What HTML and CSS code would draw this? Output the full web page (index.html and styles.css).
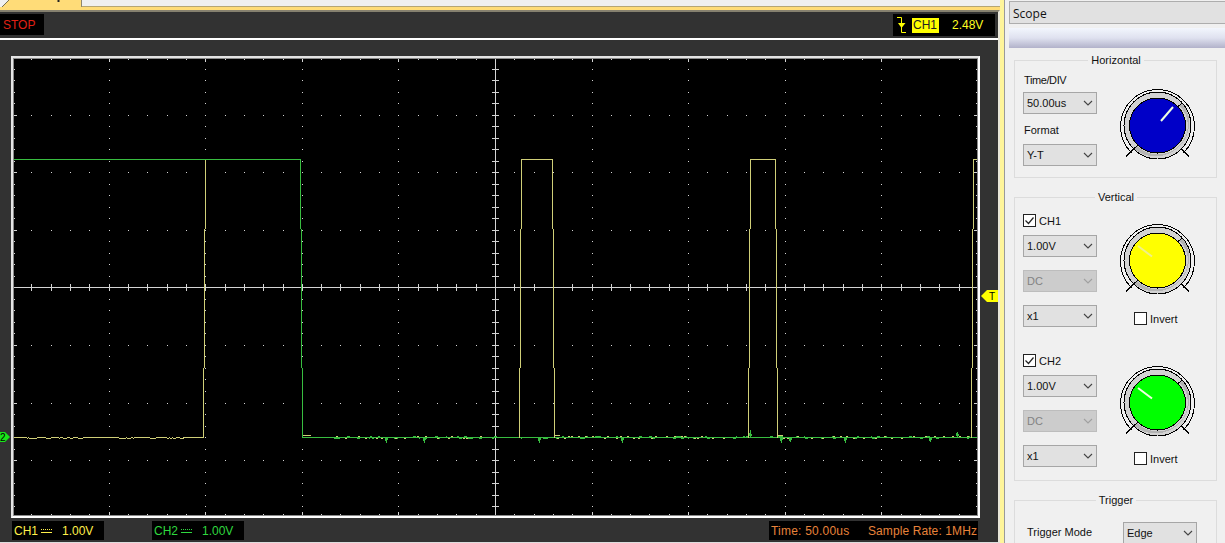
FILE: index.html
```html
<!DOCTYPE html>
<html>
<head>
    <meta charset="utf-8" />
    <title>Scope</title>
    <link rel="stylesheet" href="styles.css">
</head>
<body>
    <svg class="defs" width="0" height="0">
        <symbol id="ring" viewBox="0 0 76 74">
            <g fill="none" stroke="#000" shape-rendering="crispEdges">
                <path d="M14.5 61L7 68.500M62.500 61L70 68.500" stroke-width="1.3" />
                <path d="M12.500 64.800A37 37 0 1 1 64.500 64.800" />
                <circle cx="38.500" cy="37.500" r="33.500" fill="#d2d2d2" />
                <path d="M17.500 57.500A29 28 0 0 0 60.500 17.500L64 15.500A34 33.500 0 0 1 15 61Z" fill="#b4b4b4" stroke="none" />
                <circle cx="38.500" cy="37.500" r="33.500" />
                <path d="M14.500 61L19 57M58 19.500L63 15" />
            </g>
        </symbol>
    </svg>

    <div class="app">
        <div class="scope">
            <div class="tabs">
                <svg width="83" height="7"><path d="M0 0H9L2 7H0Z" fill="#f0f0f0" /><path d="M9 0L2 7" stroke="#77704f" /><path d="M58.500 0V2" stroke="#222" stroke-width="2" /><path d="M81.500 0V7" stroke="#8e876f" /></svg>
                <div class="tabs-rest"></div>
            </div>
            <div class="display">
                <div class="top-bar">
                    <div class="stop">STOP</div>
                    <div class="trig">
                        <svg width="12" height="18"><path d="M1 1.500H5.500V16.500H10" fill="none" stroke="#ff0" /><path d="M2 7H9.500L5.500 12Z" fill="#ff0" /></svg>
                        <span class="trig-ch">CH1</span>
                        <span class="trig-level">2.48V</span>
                    </div>
                </div>
                <div class="screen-row">
                    <svg class="zero-mark" width="11" height="12"><path d="M0 1H5L10 6L5 11H0Z" fill="#19e619" /><text x="0" y="10">2</text></svg>
                    <div class="screen">
                        <svg id="plot" width="963" height="456" viewBox="14 59 963 456" shape-rendering="crispEdges"></svg>
                    </div>
                    <svg class="trig-mark" width="17" height="12"><path d="M0 6L6 0H17V12H6Z" fill="#ff0" /><text x="8" y="10">T</text></svg>
                </div>
                <div class="bottom-bar">
                    <div class="ch ch1"><span>CH1</span><svg width="11" height="6"><path d="M0 1.500H11" stroke-dasharray="1 1" /><path d="M0 4.500H11" /></svg><span>1.00V</span></div>
                    <div class="ch ch2"><span>CH2</span><svg width="11" height="6"><path d="M0 1.500H11" stroke-dasharray="1 1" /><path d="M0 4.500H11" /></svg><span>1.00V</span></div>
                    <div class="rate"><span class="time">Time: 50.00us</span><span class="sample">Sample Rate: 1MHz</span></div>
                </div>
            </div>
        </div>

        <div class="panel">
            <div class="panel-title">Scope</div>
            <div class="panel-strip"></div>

            <div class="group horizontal">
                <div class="legend"><span>Horizontal</span></div>
                <div class="fields">
                    <label class="tight">Time/DIV</label>
                    <div class="select">50.00us<svg class="arrow"><path d="M1 1L5 5L9 1" /></svg></div>
                    <label>Format</label>
                    <div class="select">Y-T<svg class="arrow"><path d="M1 1L5 5L9 1" /></svg></div>
                </div>
                <svg class="knob" width="76" height="74"><use href="#ring" /><ellipse cx="38.500" cy="37.500" rx="28" ry="27.500" class="cap blue" /><path d="M42 33L54 19" class="hand" /></svg>
            </div>

            <div class="group vertical">
                <div class="legend"><span>Vertical</span></div>
                <div class="channel">
                    <div class="fields">
                        <div class="check"><svg width="13" height="13"><path d="M1.500 5.500L4.500 8.500L9.500 2.500" /></svg>CH1</div>
                        <div class="select">1.00V<svg class="arrow"><path d="M1 1L5 5L9 1" /></svg></div>
                        <div class="select off">DC<svg class="arrow"><path d="M1 1L5 5L9 1" /></svg></div>
                        <div class="select">x1<svg class="arrow"><path d="M1 1L5 5L9 1" /></svg></div>
                    </div>
                    <div class="dial">
                        <svg class="knob" width="76" height="74"><use href="#ring" /><ellipse cx="38.500" cy="37.500" rx="28" ry="27.500" class="cap yellow" /><path d="M19 23L33 33.500" class="hand dim" /></svg>
                        <div class="check"><svg width="13" height="13"></svg>Invert</div>
                    </div>
                </div>
                <div class="channel second">
                    <div class="fields">
                        <div class="check"><svg width="13" height="13"><path d="M1.500 5.500L4.500 8.500L9.500 2.500" /></svg>CH2</div>
                        <div class="select">1.00V<svg class="arrow"><path d="M1 1L5 5L9 1" /></svg></div>
                        <div class="select off">DC<svg class="arrow"><path d="M1 1L5 5L9 1" /></svg></div>
                        <div class="select">x1<svg class="arrow"><path d="M1 1L5 5L9 1" /></svg></div>
                    </div>
                    <div class="dial">
                        <svg class="knob" width="76" height="74"><use href="#ring" /><ellipse cx="38.500" cy="37.500" rx="28" ry="27.500" class="cap green" /><path d="M19 23L33 33.500" class="hand" /></svg>
                        <div class="check"><svg width="13" height="13"></svg>Invert</div>
                    </div>
                </div>
            </div>

            <div class="group trigger">
                <div class="legend"><span>Trigger</span></div>
                <label>Trigger Mode</label>
                <div class="select">Edge<svg class="arrow"><path d="M1 1L5 5L9 1" /></svg></div>
            </div>
        </div>
    </div>
    <script src="plot.js"></script>
</body>
</html>
```
FILE: styles.css
```css
body {
    margin: 0;
    width: 1225px;
    height: 543px;
    overflow: hidden;
    background: #f0f0f0;
    font-family: "Liberation Sans", Arial, sans-serif;
    font-size: 11px;
    color: #111;
}

.defs { display: block; }
svg { flex: none; }

.app { display: flex; height: 543px; overflow: hidden; }

/* instrument screen */
.scope {
    width: 1000px;
    height: 543px;
    border-right: 4px solid #fff59a;
    box-shadow: 1px 0 0 #9a9a9a;
    background: #ffdc78;
    flex: none;
}

.tabs { display: flex; height: 7px; }
.tabs svg { display: block; }
.tabs-rest {
    flex: 1;
    height: 6px;
    margin-left: -1px;
    background: #f0f0f0;
    border-bottom: 1px solid #b6a674;
}

.display {
    margin-top: 3px;
    height: 530px;
    background: #323232;
    border-top: 2px solid #86816f;
    border-right: 2px solid #e8e6d8;
    border-bottom: 1px solid #ddd;
    font-size: 12px;
}

.top-bar {
    display: flex;
    justify-content: space-between;
    box-sizing: border-box;
    height: 28px;
    padding: 2px 3px 0 0;
    border-bottom: 2px solid #fff;
}

.stop {
    width: 41px;
    height: 21px;
    padding-left: 3px;
    background: #000;
    color: #e02015;
    line-height: 22px;
}

.trig {
    display: flex;
    align-items: center;
    box-sizing: border-box;
    width: 102px;
    height: 22px;
    padding-left: 3px;
    background: #000;
    color: #ffff20;
}
.trig-ch {
    width: 26px;
    margin-left: 4px;
    padding-left: 1px;
    background: #ff0;
    color: #222;
    line-height: 15px;
}
.trig-level { margin-left: 13px; }

.screen-row { display: flex; height: 462px; padding-top: 16px; }
.zero-mark { margin-top: 375px; font-size: 10px; }
.screen {
    width: 963px;
    height: 456px;
    border: 2px solid #e4e4e4;
    border-right-color: #fff;
    border-bottom-color: #fff;
    outline: 1px solid #8a8a8a;
    outline-offset: -3px;
    padding: 1px;
    background: #000;
}
#plot { display: block; }
.trig-mark { margin: 234px 0 0 1px; font-size: 10px; }

.bottom-bar { display: flex; padding: 3px 0 0 12px; line-height: 20px; }
.ch {
    display: flex;
    align-items: center;
    box-sizing: border-box;
    width: 92px;
    height: 19px;
    margin-right: 48px;
    padding-left: 2px;
    background: #000;
}
.ch svg { margin: 0 10px 0 3px; stroke: currentColor; shape-rendering: crispEdges; }
.ch1 { color: #fff04a; }
.ch2 { color: #2fd83f; }
.rate {
    display: flex;
    justify-content: space-between;
    box-sizing: border-box;
    width: 209px;
    height: 19px;
    margin-left: 477px;
    padding: 0 1px 0 2px;
    background: #000;
    color: #e8833a;
    white-space: nowrap;
}
.time { letter-spacing: 0.22px; }
.sample { letter-spacing: 0.1px; }

/* control panel */
.panel { width: 216px; margin-left: 5px; flex: none; }
.panel-title {
    box-sizing: border-box;
    height: 23px;
    margin-top: 1px;
    padding-left: 3px;
    border: 1px solid #adadad;
    border-right: 0;
    background: #e1e1e1;
    font: 12px/23px "Open Sans", sans-serif;
}
.panel-strip {
    height: 20px;
    margin-top: 4px;
    background: linear-gradient(#f2f6fd, #dfe1ef 50%, #b2b2ca);
}

.group {
    position: relative;
    box-sizing: border-box;
    width: 203px;
    margin-left: 5px;
    border: 1px solid #dcdcdc;
}
.legend {
    position: absolute;
    top: -8px;
    left: 1px;
    right: 0;
    text-align: center;
    line-height: 15px;
}
.legend span { padding: 0 3px; background: #f0f0f0; }

.horizontal { display: flex; height: 118px; margin-top: 12px; }
.vertical { height: 284px; margin-top: 19px; }
.trigger {
    display: flex;
    height: 60px;
    margin-top: 19px;
    padding: 21px 0 0 12px;
}

.fields { width: 74px; margin-left: 8px; }
.horizontal label { display: block; height: 14px; margin: 12px 0 5px 1px; line-height: 14px; }
.horizontal label + .select + label { margin-top: 9px; margin-bottom: 7px; }
.tight { letter-spacing: -0.4px; }
.trigger label { width: 96px; line-height: 21px; }

.select {
    display: flex;
    align-items: center;
    justify-content: space-between;
    box-sizing: border-box;
    width: 74px;
    height: 22px;
    padding: 0 3px;
    border: 1px solid #a6a6a6;
    background: #e1e1e1;
}
.arrow { width: 10px; height: 7px; fill: none; stroke: #444; stroke-width: 1.1; }
.off { background: #ccc; border-color: #bdbdbd; color: #838383; }
.off .arrow { stroke: #a0a0a0; }

.channel { display: flex; padding-top: 16px; height: 124px; }
.channel .select { margin-bottom: 13px; }
.check { display: flex; align-items: center; height: 13px; margin-bottom: 8px; }
.check svg {
    box-sizing: border-box;
    width: 13px;
    height: 13px;
    margin-right: 3px;
    border: 1px solid #222;
    background: #fff;
    fill: none;
    stroke: #222;
    stroke-width: 1.2;
    overflow: visible;
}

.knob { margin-left: 22px; display: block; }
.horizontal .knob { margin-top: 27px; }
.channel .knob { margin-top: 9px; }
.second .knob { margin-top: 11px; }
.dial .check { margin: 15px 0 0 37px; }
.second .dial .check { margin-top: 13px; }
.cap { stroke: #000; shape-rendering: crispEdges; }
.blue { fill: #0000c8; }
.yellow { fill: #ff0; }
.green { fill: #0f0; }
.hand { stroke: #f0ffe0; stroke-width: 2; }
.dim { stroke: #f0f08a; }
```
FILE: plot.js
```js
var plot = document.getElementById("plot");

function path(d, color) {
    var p = document.createElementNS("http://www.w3.org/2000/svg", "path");
    p.setAttribute("d", d);
    p.setAttribute("fill", color);
    plot.appendChild(p);
}

function rect(x, y, w, h) {
    return "M" + x + " " + y + "h" + w + "v" + h + "h" + (-w) + "z";
}

function gridX(k) {
    return Math.floor(12.6 + 19.315 * k);
}

function gridY(k) {
    return Math.floor((k > 28 ? 58.1 : 57.6) + 11.5 * k);
}

function drawGrid() {
    var d = rect(495, 59, 1, 456) + rect(14, 287, 963, 1);
    for (var i = 1; i < 50; i++) {
        var x = gridX(i);
        var major = i % 5 == 0;
        d += rect(x, 59, 1, major ? 3 : 1) + rect(x, major ? 512 : 514, 1, major ? 3 : 1);
        d += rect(x, 284, 1, 7);
        for (var j = 1; j < 40; j++) {
            if (major || j % 5 == 0) d += rect(x, gridY(j), 1, 1);
        }
    }
    for (var j = 1; j < 40; j++) {
        var y = gridY(j);
        var w = j % 5 == 0 ? 3 : 1;
        d += rect(14, y, w, 1) + rect(977 - w, y, w, 1) + rect(492, y, 7, 1);
    }
    path(d, "#d4d4d4");
}

// vertical edge that shifts one pixel twice on its way down
function edge(x, step) {
    return rect(x, 159, 1, 70) + rect(x + step, 229, 1, 139) + rect(x + 2 * step, 368, 1, 70);
}

var seed = 7;
function random() {
    seed = (seed * 16807) % 2147483647;
    return seed / 2147483647;
}

function noise(from, to, base, up, rate) {
    var d = "";
    var x = from;
    while (x < to) {
        if (random() < rate) {
            var dy = up && random() < 0.5 ? -1 : 1;
            var w = 1 + Math.floor(random() * 3);
            d += rect(x, base + dy, w, 1);
            x += w;
        }
        else {
            var run = 1 + Math.floor(random() * 4);
            d += rect(x, base, run, 1);
            x += run;
        }
    }
    return d;
}

function spike(x, h) {
    var dir = h < 0 ? -1 : 1;
    return rect(x - 1, 437 + dir, 1, 3 * dir) + rect(x, Math.min(437, 437 + h), 1, Math.abs(h)) + rect(x + 1, 437 + dir, 1, 2 * dir);
}

drawGrid();

var green = rect(14, 159, 287, 1) + edge(300, 1) + rect(302, 437, 675, 1);
green += noise(334, 495, 437, true, 0.35) + noise(514, 977, 437, true, 0.35);
[[386, 6], [424, 6], [539, 6], [622, 6], [750, -7], [781, 6], [790, 5], [845, 6], [930, 5], [957, -5]].forEach(function (s) {
    green += spike(s[0], s[1]);
});
path(green, "#38bd40");

var yellow = noise(14, 88, 437, false, 0.5) + rect(88, 437, 31, 1) + noise(119, 135, 437, false, 0.5) + rect(135, 437, 15, 1) + noise(150, 183, 437, false, 0.5) + rect(183, 437, 20, 1);
yellow += edge(205, -1);
yellow += edge(521, -1) + rect(521, 159, 32, 1) + edge(552, 1);
yellow += edge(750, -1) + rect(750, 159, 26, 1) + edge(775, 1);
yellow += edge(973, -1) + rect(973, 159, 4, 1);
// small yellow flecks over the second channel
for (var x = 336; x < 970; x += 3 + Math.floor(random() * 12)) {
    if ((x > 492 && x < 556) || (x > 735 && x < 777)) continue;
    yellow += rect(x, random() < 0.5 ? 436 : 438, 2, 1);
}
yellow += rect(303, 435, 8, 1) + rect(555, 435, 5, 1) + rect(778, 435, 5, 1);
path(yellow, "#d0cf78");
path(rect(205, 159, 96, 1), "#38bd40");
```
